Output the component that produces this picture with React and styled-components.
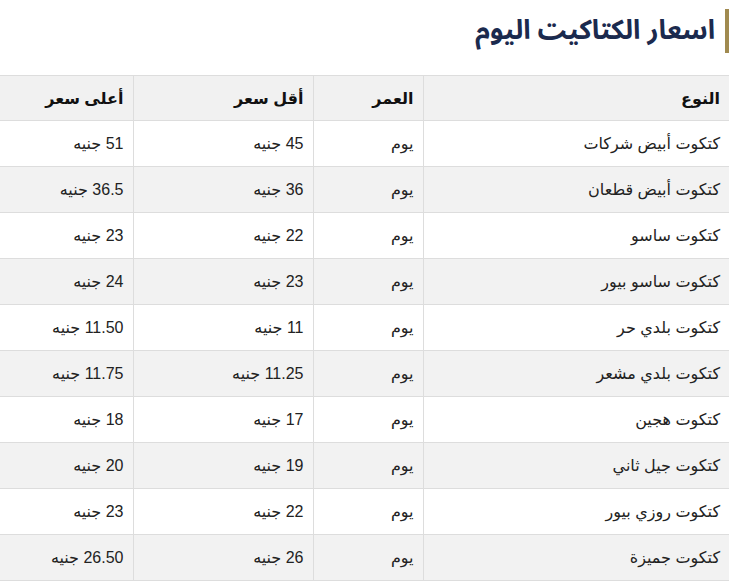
import React from "react";
import styled, { createGlobalStyle } from "styled-components";

const GlobalStyle = createGlobalStyle`
  html, body {
    margin: 0;
    padding: 0;
    background: #fff;
  }
  body {
    direction: rtl;
    font-family: "Liberation Sans", "DejaVu Sans", sans-serif;
    color: #222;
  }
`;

const Page = styled.div`
  width: 729px;
`;

const Title = styled.h2`
  margin: 9px 0 22px 0;
  padding: 4px 10px 4px 0;
  border-right: 4px solid #a08a50;
  font-family: "Noto Sans Arabic", "Noto Sans", "DejaVu Sans", sans-serif;
  font-size: 27px;
  font-weight: bold;
  color: #1b2a4e;
  line-height: 36px;
`;

const Table = styled.table`
  width: 729px;
  table-layout: fixed;
  border-collapse: collapse;
  font-size: 16px;
`;

const HeadCell = styled.th`
  box-sizing: border-box;
  background: #f1f1f1;
  border: 1px solid #ddd;
  border-right: none;
  text-align: right;
  padding: 0 9px;
  height: 45px;
  font-weight: bold;
  color: #111;
  width: ${(p) => p.$w};
  &:last-child {
    border-left: none;
  }
`;

const Row = styled.tr`
  background: ${(p) => (p.$alt ? "#f2f2f2" : "#fff")};
`;

const Cell = styled.td`
  border: 1px solid #ddd;
  border-right: none;
  text-align: right;
  padding: 0 9px;
  height: 45px;
  color: #222;
  &:last-child {
    border-left: none;
  }
`;

const rows = [
  ["كتكوت أبيض شركات", "يوم", "45 جنيه", "51 جنيه"],
  ["كتكوت أبيض قطعان", "يوم", "36 جنيه", "36.5 جنيه"],
  ["كتكوت ساسو", "يوم", "22 جنيه", "23 جنيه"],
  ["كتكوت ساسو بيور", "يوم", "23 جنيه", "24 جنيه"],
  ["كتكوت بلدي حر", "يوم", "11 جنيه", "11.50 جنيه"],
  ["كتكوت بلدي مشعر", "يوم", "11.25 جنيه", "11.75 جنيه"],
  ["كتكوت هجين", "يوم", "17 جنيه", "18 جنيه"],
  ["كتكوت جيل ثاني", "يوم", "19 جنيه", "20 جنيه"],
  ["كتكوت روزي بيور", "يوم", "22 جنيه", "23 جنيه"],
  ["كتكوت جميزة", "يوم", "26 جنيه", "26.50 جنيه"],
];

export default function App() {
  return (
    <Page>
      <GlobalStyle />
      <Title>اسعار الكتاكيت اليوم</Title>
      <Table>
        <thead>
          <tr>
            <HeadCell $w="306px">النوع</HeadCell>
            <HeadCell $w="110px">العمر</HeadCell>
            <HeadCell $w="180px">أقل سعر</HeadCell>
            <HeadCell $w="133px">أعلى سعر</HeadCell>
          </tr>
        </thead>
        <tbody>
          {rows.map((r, i) => (
            <Row key={i} $alt={i % 2 === 1}>
              {r.map((c, j) => (
                <Cell key={j}>{c}</Cell>
              ))}
            </Row>
          ))}
        </tbody>
      </Table>
    </Page>
  );
}
